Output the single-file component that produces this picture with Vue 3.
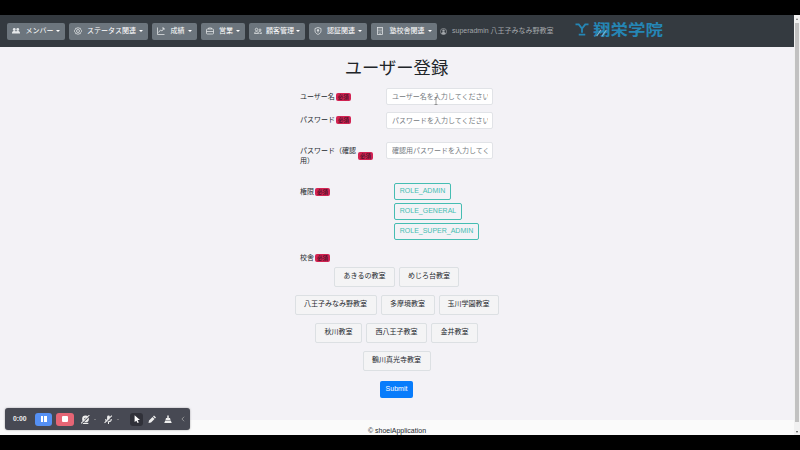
<script setup>
import { ref } from 'vue'

const menus = [
  { label: 'メンバー', icon: 'members', width: 58, text: 27 },
  { label: 'ステータス関連', icon: 'target', width: 79, text: 49 },
  { label: '成績', icon: 'chart', width: 45, text: 14 },
  { label: '営業', icon: 'case', width: 44, text: 14 },
  { label: '顧客管理', icon: 'people', width: 56, text: 28 },
  { label: '認証関連', icon: 'shield', width: 58, text: 28 },
  { label: '塾校舎関連', icon: 'building', width: 66, text: 35 }
]
const fields = [
  { label: 'ユーザー名', hint: 'ユーザー名を入力してください', kind: 'first' },
  { label: 'パスワード', hint: 'パスワードを入力してください', kind: 'second' },
  { label: 'パスワード（確認用）', hint: '確認用パスワードを入力してください', kind: 'third' }
]
const roles = [
  { name: 'ROLE_ADMIN', width: 57 },
  { name: 'ROLE_GENERAL', width: 68 },
  { name: 'ROLE_SUPER_ADMIN', width: 85 }
]
const schools = [
  [['あきるの教室', 61], ['めじろ台教室', 60]],
  [['八王子みなみ野教室', 82], ['多摩境教室', 54], ['玉川学園教室', 60]],
  [['秋川教室', 47], ['西八王子教室', 61], ['金井教室', 47]],
  [['鶴川真光寺教室', 68]]
]
const values = ref(['', '', ''])
</script>

<template>
  <div class="screen">
    <div class="window">
      <div class="page">
        <nav class="navbar">
          <button v-for="m in menus" :key="m.label" class="menu" :style="{ width: m.width + 'px' }">
            <svg class="icon" viewBox="0 0 16 16" fill="none" stroke="currentColor" stroke-width="1.5">
              <g v-if="m.icon === 'members'" fill="currentColor" stroke="none">
                <circle cx="4.500" cy="5" r="2.800" /><circle cx="11.500" cy="5" r="2.800" />
                <path d="M0 13v-1c0-3 2-4 4.500-4 1.500 0 2.500.3 3.500 1 1-.7 2-1 3.500-1 2.500 0 4.500 1 4.500 4v1z" />
              </g>
              <g v-else-if="m.icon === 'target'">
                <path d="m8 1 2 1.500 2.500-.1.8 2.400L15 7v2l-1.700 2-.8 2.500-2.500-.1L8 15l-2-1.600-2.500.1L2.700 11 1 9V7l1.700-2.200.8-2.400 2.500.1z" />
                <circle cx="8" cy="8" r="3" />
              </g>
              <path v-else-if="m.icon === 'chart'" d="M1 1v14h14M3 11l4-5 3 2 4-6M10 2h4v4" />
              <g v-else-if="m.icon === 'case'">
                <rect x="1" y="4" width="14" height="10" rx="1.500" /><path d="M5 4V2h6v2M1 9h14" />
              </g>
              <g v-else-if="m.icon === 'people'">
                <circle cx="5" cy="5" r="2.500" /><circle cx="12" cy="6" r="2" />
                <path d="M1 13c0-5 8-5 8 0zM9 10c3-2 6 0 6 3h-4" />
              </g>
              <g v-else-if="m.icon === 'shield'">
                <path d="M8 1 2 3v5c0 4 4 6 6 7 2-1 6-3 6-7V3z" /><circle cx="8" cy="6.500" r="1.500" fill="currentColor" /><path d="M8 7v4" />
              </g>
              <g v-else>
                <rect x="3" y="1" width="10" height="14" /><path d="M5 4h2m2 0h2M5 7h2m2 0h2M5 10h2m2 0h2M8 12v3" />
              </g>
            </svg>
            <span class="menu-label" :style="{ width: m.text + 'px' }">{{ m.label }}</span>
            <i class="caret"></i>
          </button>
          <div class="account">
            <svg class="avatar" viewBox="0 0 16 16">
              <circle cx="8" cy="8" r="7" fill="none" stroke="currentColor" stroke-width="1.500" />
              <circle cx="8" cy="6" r="2.800" fill="currentColor" />
              <path d="M3 13c1-5 9-5 10 0-3 2.500-7 2.500-10 0z" fill="currentColor" />
            </svg>
            <span>superadmin 八王子みなみ野教室</span>
          </div>
          <div class="brand">
            <svg class="brand-mark" viewBox="0 0 14 14">
              <path d="M0 1.500h3.500L7 6l3.500-4.500H14M7 6v4.500M3.500 12.500h7" fill="none" stroke="currentColor" stroke-width="2" />
            </svg>
            <span class="brand-name">翔栄学院</span>
            <svg class="brand-accent" viewBox="0 0 14 10"><path d="m1 9 5-7M7 9l5-7" stroke="#79b5d9" stroke-width="1.200" /></svg>
          </div>
        </nav>

        <main class="content">
          <h1>ユーザー登録</h1>
          <div v-for="(f, i) in fields" :key="f.label" class="field" :class="f.kind">
            <label><span class="label-text">{{ f.label }}</span><b class="required">必須</b></label>
            <input v-model="values[i]" :placeholder="f.hint" />
          </div>
          <div class="field roles-row">
            <label>権限<b class="required">必須</b></label>
            <div class="roles">
              <button v-for="r in roles" :key="r.name" class="role" :style="{ width: r.width + 'px' }">{{ r.name }}</button>
            </div>
          </div>
          <div class="field school-head">
            <label>校舎<b class="required">必須</b></label>
          </div>
          <div class="schools">
            <div v-for="(row, i) in schools" :key="i" class="school-row">
              <button v-for="[name, width] in row" :key="name" class="school" :style="{ width: width + 'px' }">{{ name }}</button>
            </div>
          </div>
          <button class="submit">Submit</button>
        </main>
        <footer>© shoeiApplication</footer>
      </div>
      <div class="scrollbar">
        <i class="arrow up"></i>
        <div class="thumb"></div>
        <i class="arrow down"></i>
      </div>
    </div>

    <svg class="text-cursor" viewBox="0 0 4 8"><path d="M.5.5h3M2 .5v7M.5 7.500h3" stroke="#666" stroke-width=".6" /></svg>

    <div class="recorder">
      <span class="time">0:00</span>
      <button class="pause"><i></i><i></i></button>
      <button class="stop"><i></i></button>
      <svg class="tool camera" viewBox="0 0 16 16">
        <circle cx="8" cy="7" r="6" fill="currentColor" />
        <circle cx="8" cy="7" r="2.300" fill="#474953" />
        <path d="M3 15h10" stroke="currentColor" stroke-width="2" />
        <path d="M2 15 16 1" stroke="#474953" stroke-width="2" />
        <path d="M0 15 15 0" stroke="currentColor" stroke-width="1.800" />
      </svg>
      <i class="mini"></i>
      <svg class="tool mic" viewBox="0 0 16 16" fill="none" stroke="currentColor" stroke-width="1.800">
        <rect x="5.500" y="1" width="5" height="9" rx="2.500" fill="currentColor" stroke="none" />
        <path d="M3 7c0 3 1 5 5 5s5-2 5-5M8 12v4" />
        <path d="M2 15 15 2" stroke="#474953" />
        <path d="M1 14 14 1" />
      </svg>
      <i class="mini"></i>
      <span class="pointer">
        <svg viewBox="0 0 10 14"><path d="M1 0v11l3-2 2 4 2-1-2-4h4z" fill="#fff" /></svg>
      </span>
      <svg class="tool pencil" viewBox="0 0 16 16"><path d="m1 15 1-5 7-7 4 4-7 7zM10 2l2-2 4 4-2 2z" fill="currentColor" /></svg>
      <svg class="tool broom" viewBox="0 0 16 16"><path d="M6.500 0h3v5h2.500l1 4H3l1-4h2.500zM2.500 10h11l2 5H.5z" fill="currentColor" /></svg>
      <svg class="collapse" viewBox="0 0 5 8"><path d="M4 1 1 4l3 3" fill="none" stroke="currentColor" /></svg>
    </div>
  </div>
</template>

<style>
body { background: #000; overflow: hidden; }
</style>

<style scoped>
* { box-sizing: border-box; }
button, input { font: inherit; margin: 0; padding: 0; border: 0; }
svg { display: block; flex-shrink: 0; }
.screen {
  position: relative;
  width: 800px;
  height: 450px;
  padding: 15px 0;
  background: #000;
  color: #24292e;
  font: 7px/10.500px "Liberation Sans", "Noto Sans CJK JP", sans-serif;
}
.window { display: flex; height: 420px; background: #f3f2f6; }
.page { display: flex; flex-direction: column; width: 794px; }
.navbar { display: flex; align-items: center; gap: 4px; height: 32px; padding-left: 7px; background: #343a40; flex-shrink: 0; }
.menu {
  display: flex;
  align-items: center;
  justify-content: space-between;
  height: 17px;
  padding: 0 5px 0 5px;
  border-radius: 2px;
  background: #6c757d;
  color: #fff;
  flex-shrink: 0;
}
.icon { width: 8px; height: 8px; color: #e5e8ea; }
.menu-label { white-space: nowrap; margin-left: 2px; }
.caret { border: 2px solid transparent; border-top-color: #fff; border-bottom: 0; }
.account { display: flex; align-items: center; gap: 5px; width: 117px; color: #a3a7ab; white-space: nowrap; margin-left: -1px; }
.avatar { width: 7px; height: 7px; }
.brand { position: relative; display: flex; align-items: center; gap: 4px; margin: -3px 0 0 14px; color: #2586b5; }
.brand-mark { width: 14px; height: 13px; }
.brand-name { font-size: 17.500px; line-height: 18px; font-weight: 700; transform: scaleY(.86); }
.brand-accent { position: absolute; left: 20px; top: 7px; width: 14px; height: 9px; }
.content { display: flex; flex-direction: column; align-items: center; height: 373px; padding-right: 1px; flex-shrink: 0; }
h1 { margin: 9.500px 0 0; font-size: 17.300px; line-height: 23px; font-weight: 400; color: #212529; }
.field { display: flex; align-items: flex-start; justify-content: space-between; width: 193px; height: 23.500px; }
label { display: flex; align-items: center; gap: 1px; padding-top: 3.500px; white-space: nowrap; }
.first { margin-top: 8.500px; }
.second { height: 30.500px; }
.third { height: 41px; }
.third .label-text { width: 57px; white-space: normal; }
.required {
  width: 15px;
  height: 8px;
  border-radius: 2px;
  background: #d32353;
  color: #55132a;
  font-size: 5.500px;
  line-height: 8px;
  text-align: center;
}
input { width: 107px; height: 17px; padding: 0 4px 0 5px; border: 1px solid #e1e3e7; border-radius: 2px; background: #fff; }
input::placeholder { color: #747980; opacity: 1; }
.roles-row { height: 68px; }
.roles { display: flex; flex-direction: column; gap: 3px; width: 99px; }
.role { height: 17px; border: 1px solid #45bdb2; border-radius: 2px; background: transparent; color: #45bdb2; white-space: nowrap; font-size: 7px; }
.school-head { height: 15.500px; }
.school-head label { padding-top: 2px; }
.schools { display: flex; flex-direction: column; gap: 8px; width: 212px; }
.school-row { display: flex; justify-content: center; gap: 4px; }
.school { height: 20px; border: 1px solid #dce0e3; border-radius: 2px; background: #f4f4f5; color: #24292e; white-space: nowrap; flex-shrink: 0; }
.submit { width: 33px; height: 17px; margin-top: 10px; border-radius: 2px; background: #087cfb; color: #fff; }
footer { height: 15px; padding: 5.500px 0 0; background: #fafafa; text-align: center; overflow: hidden; }
.scrollbar { display: flex; flex-direction: column; align-items: center; justify-content: space-between; width: 6px; padding: 3px 0 2px; background: #f1f1f1; }
.thumb { width: 4px; height: 399px; margin-bottom: 7px; background: #c1c1c1; }
.arrow { border: 1.500px solid transparent; }
.up { border-bottom: 2px solid #777; border-top: 0; }
.down { border-top: 2px solid #444; border-bottom: 0; }
.text-cursor { position: absolute; left: 434px; top: 97px; width: 4px; height: 8px; }
.recorder {
  position: absolute;
  left: 5px;
  top: 408px;
  display: flex;
  align-items: center;
  width: 185px;
  height: 22px;
  padding-left: 8px;
  border-radius: 3px;
  background: #474953;
  box-shadow: 0 0 2px #5558;
  color: #eee;
}
.time { width: 22px; font-weight: 700; font-size: 6.800px; }
.pause, .stop { display: flex; align-items: center; justify-content: center; gap: 1px; width: 17px; height: 13px; border-radius: 3px; }
.pause { background: #5590f4; }
.stop { margin-left: 4px; width: 18px; background: #e66575; }
.pause i { width: 2.500px; height: 6px; background: #fff; }
.stop i { width: 6px; height: 6px; border-radius: 1px; background: #fff; }
.tool { width: 9px; height: 9px; }
.camera { margin-left: 7px; }
.mic { margin-left: 8px; }
.mini { margin-left: 4px; border: 1.500px solid transparent; border-top-color: #aaa; border-bottom: 0; }
.pointer { display: flex; align-items: center; justify-content: center; margin-left: 11px; width: 13px; height: 13px; border-radius: 3px; background: #303139; }
.pointer svg { width: 6px; height: 9px; }
.pencil { margin-left: 5px; width: 8px; }
.broom { margin-left: 8px; width: 8px; }
.collapse { margin-left: 9px; width: 4px; height: 6px; color: #aaa; }
</style>
